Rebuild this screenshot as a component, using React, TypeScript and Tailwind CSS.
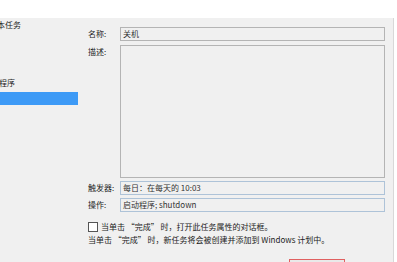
import React from 'react';

const font = { fontFamily: '"Noto Sans CJK SC", "Liberation Sans", sans-serif' };

const Field: React.FC<{ label: string; value?: string; blue?: boolean; className?: string }> = ({ label, value, blue, className }) => (
  <div className={`flex ${className ?? ''}`}>
    <div className="w-[42px] shrink-0 pl-[10px] text-[8px] leading-[14px] text-[#222] whitespace-nowrap">{label}</div>
    <div
      className={`flex-1 h-[14px] border bg-[#f0f0f0] px-[2px] text-[8px] leading-[12px] text-[#333] ${
        blue ? 'border-[#aec3d8]' : 'border-[#b4b4b4]'
      }`}
    >
      {value}
    </div>
  </div>
);

const App: React.FC = () => {
  return (
    <div className="w-[397px] h-[262px] overflow-hidden bg-[#f0f0f0] flex flex-col" style={font}>
      <div className="h-[18px] shrink-0 bg-white" />
      <div className="flex flex-1">
        <div className="w-[78px] shrink-0 overflow-hidden text-[8px] text-[#222]">
          <div className="ml-[-3px] mt-[1px] leading-[12px] whitespace-nowrap">本任务</div>
          <div className="ml-[-1px] mt-[46px] leading-[12px] whitespace-nowrap">程序</div>
          <div className="mt-[3px] h-[13px] bg-[#3d9af6]" />
        </div>
        <div className="flex-1 flex flex-col pr-[8px] pt-[9px]">
          <Field label="名称:" value="关机" />
          <div className="flex mt-[4px]">
            <div className="w-[42px] shrink-0 pl-[10px] text-[8px] leading-[14px] text-[#222]">描述:</div>
            <div className="flex-1 h-[133px] border border-[#b4b4b4] bg-[#f0f0f0]" />
          </div>
          <Field label="触发器:" value="每日：在每天的 10:03" blue className="mt-[3px]" />
          <Field label="操作:" value="启动程序; shutdown" blue className="mt-[3px]" />
          <div className="mt-[9px] flex items-center gap-[3px] pl-[10px] text-[8px] leading-[12px] text-[#222] whitespace-nowrap">
            <span className="inline-block h-[10px] w-[10px] border border-[#555] bg-white" />
            <span>当单击 “完成” 时，打开此任务属性的对话框。</span>
          </div>
          <div className="mt-[1px] pl-[10px] text-[8px] leading-[12px] text-[#222] whitespace-nowrap">
            当单击 “完成” 时，新任务将会被创建并添加到 Windows 计划中。
          </div>
          <div className="mt-[13px] flex">
            <div className="ml-[211px] h-[20px] w-[56px] border border-[#e06060] bg-[#e9e9e9]" />
          </div>
        </div>
        <div className="w-[4px] shrink-0 border-l border-[#d8d8d8] bg-white" />
      </div>
    </div>
  );
};

export default App;
